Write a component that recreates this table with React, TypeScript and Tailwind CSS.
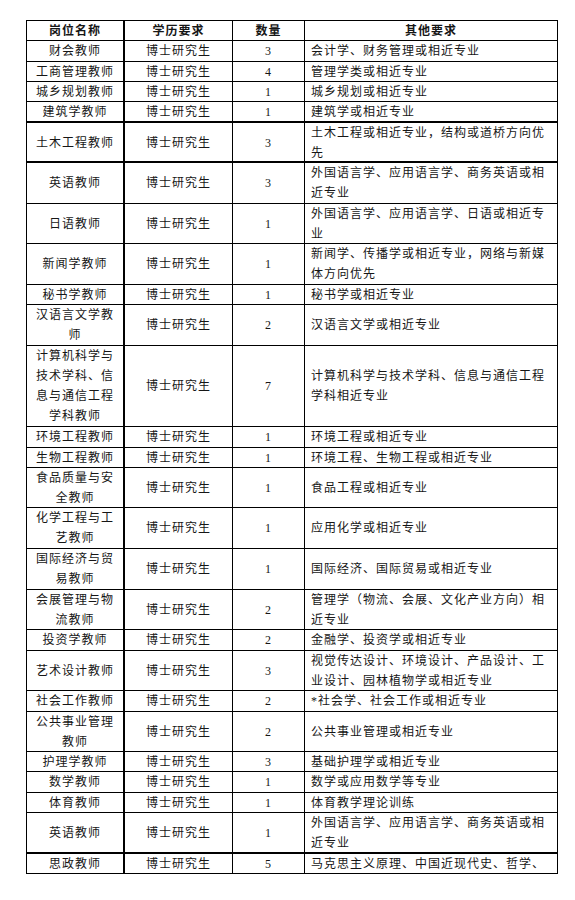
import React from "react";

type Row = {
  n: string[];
  c: string;
  o: string[];
  h: string;
  thick?: boolean;
};

const rows: Row[] = [
  { n: ["财会教师"], c: "3", o: ["会计学、财务管理或相近专业"], h: "h-[21px]" },
  { n: ["工商管理教师"], c: "4", o: ["管理学类或相近专业"], h: "h-[20px]" },
  { n: ["城乡规划教师"], c: "1", o: ["城乡规划或相近专业"], h: "h-[20px]" },
  { n: ["建筑学教师"], c: "1", o: ["建筑学或相近专业"], h: "h-[21px]", thick: true },
  { n: ["土木工程教师"], c: "3", o: ["土木工程或相近专业，结构或道桥方向优", "先"], h: "h-[40px]", thick: true },
  { n: ["英语教师"], c: "3", o: ["外国语言学、应用语言学、商务英语或相", "近专业"], h: "h-[41px]" },
  { n: ["日语教师"], c: "1", o: ["外国语言学、应用语言学、日语或相近专", "业"], h: "h-[40px]" },
  { n: ["新闻学教师"], c: "1", o: ["新闻学、传播学或相近专业，网络与新媒", "体方向优先"], h: "h-[41px]" },
  { n: ["秘书学教师"], c: "1", o: ["秘书学或相近专业"], h: "h-[20px]" },
  { n: ["汉语言文学教", "师"], c: "2", o: ["汉语言文学或相近专业"], h: "h-[41px]" },
  {
    n: ["计算机科学与", "技术学科、信", "息与通信工程", "学科教师"],
    c: "7",
    o: ["计算机科学与技术学科、信息与通信工程", "学科相近专业"],
    h: "h-[81px]",
  },
  { n: ["环境工程教师"], c: "1", o: ["环境工程或相近专业"], h: "h-[21px]" },
  { n: ["生物工程教师"], c: "1", o: ["环境工程、生物工程或相近专业"], h: "h-[20px]" },
  { n: ["食品质量与安", "全教师"], c: "1", o: ["食品工程或相近专业"], h: "h-[40px]" },
  { n: ["化学工程与工", "艺教师"], c: "1", o: ["应用化学或相近专业"], h: "h-[41px]" },
  { n: ["国际经济与贸", "易教师"], c: "1", o: ["国际经济、国际贸易或相近专业"], h: "h-[41px]" },
  { n: ["会展管理与物", "流教师"], c: "2", o: ["管理学（物流、会展、文化产业方向）相", "近专业"], h: "h-[40px]" },
  { n: ["投资学教师"], c: "2", o: ["金融学、投资学或相近专业"], h: "h-[21px]" },
  { n: ["艺术设计教师"], c: "3", o: ["视觉传达设计、环境设计、产品设计、工", "业设计、园林植物学或相近专业"], h: "h-[40px]" },
  { n: ["社会工作教师"], c: "2", o: ["*社会学、社会工作或相近专业"], h: "h-[21px]" },
  { n: ["公共事业管理", "教师"], c: "2", o: ["公共事业管理或相近专业"], h: "h-[40px]" },
  { n: ["护理学教师"], c: "3", o: ["基础护理学或相近专业"], h: "h-[20px]" },
  { n: ["数学教师"], c: "1", o: ["数学或应用数学等专业"], h: "h-[21px]" },
  { n: ["体育教师"], c: "1", o: ["体育教学理论训练"], h: "h-[20px]" },
  { n: ["英语教师"], c: "1", o: ["外国语言学、应用语言学、商务英语或相", "近专业"], h: "h-[41px]", thick: true },
  { n: ["思政教师"], c: "5", o: ["马克思主义原理、中国近现代史、哲学、"], h: "h-[20px]" },
];

const cols = "grid grid-cols-[98px_108px_72px_253px]";

function Lines({ lines }: { lines: string[] }) {
  return (
    <div className="whitespace-nowrap">
      {lines.map((l, i) => (
        <div key={i}>{l}</div>
      ))}
    </div>
  );
}

export default function App() {
  return (
    <div
      className="min-h-[900px] w-[575px] bg-white pt-[20px] pl-[26px] text-[12px] leading-[20px] tracking-[1px] text-[#161616]"
      style={{ fontFamily: "'Liberation Serif', 'Noto Sans CJK SC', serif" }}
    >
      <div className="w-[532px] border-l border-t border-black">
        <div className={`${cols} h-[20px] border-b border-black font-bold`}>
          <div className="flex items-center justify-center border-r-2 border-black">岗位名称</div>
          <div className="flex items-center justify-center border-r border-black">学历要求</div>
          <div className="flex items-center justify-center border-r border-black">数量</div>
          <div className="flex items-center justify-center border-r border-black">其他要求</div>
        </div>
        {rows.map((r, i) => (
          <div
            key={i}
            className={`${cols} ${r.h} ${r.thick ? "border-b-2" : "border-b"} border-black`}
          >
            <div className="flex items-center justify-center border-r-2 border-black text-center">
              <Lines lines={r.n} />
            </div>
            <div className="flex items-center justify-center border-r border-black">博士研究生</div>
            <div className="flex items-center justify-center border-r border-black">{r.c}</div>
            <div className="flex items-center border-r border-black pl-[6px]">
              <Lines lines={r.o} />
            </div>
          </div>
        ))}
      </div>
    </div>
  );
}
